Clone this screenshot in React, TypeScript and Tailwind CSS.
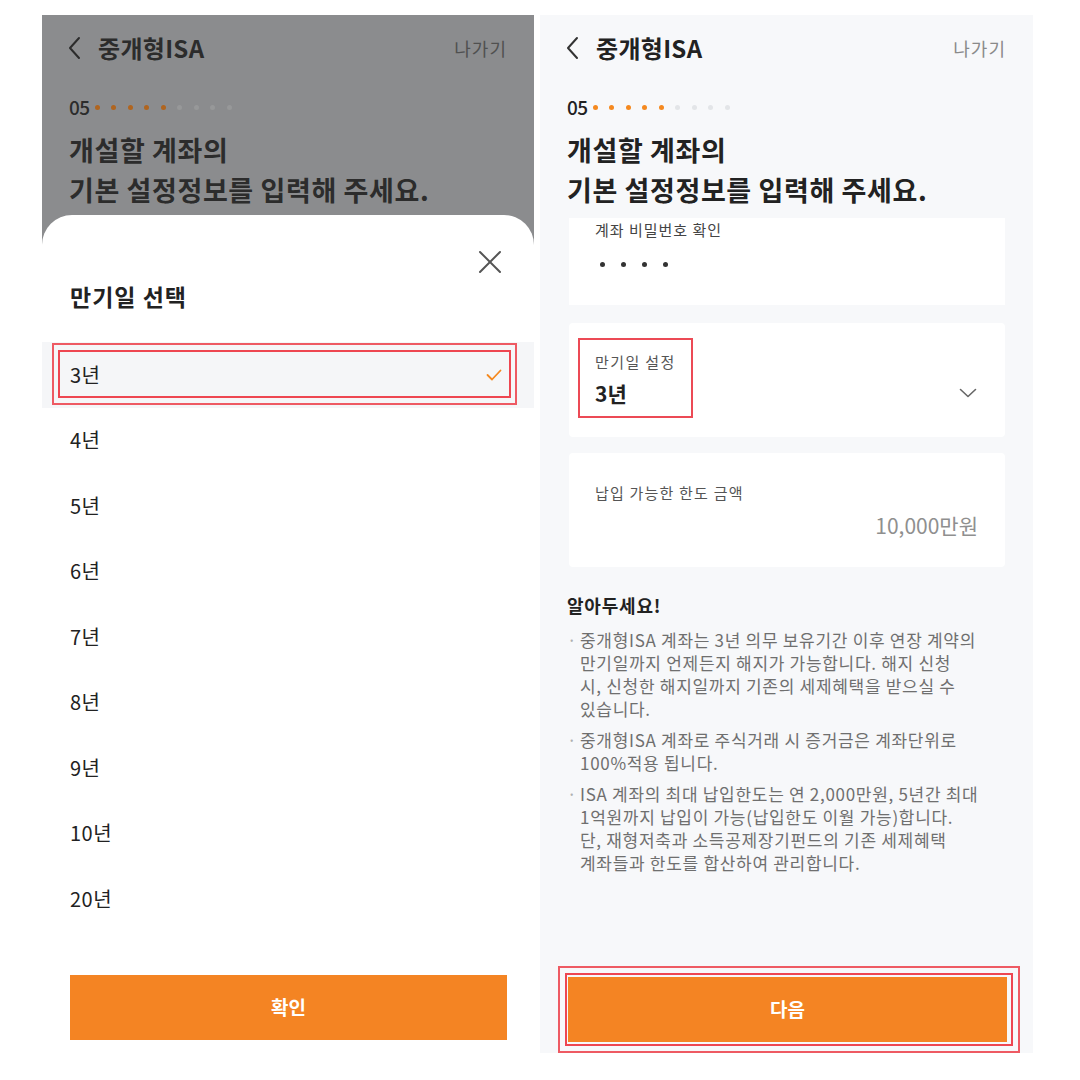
import React from 'react';

const font = "font-['Noto_Sans_CJK_KR','Noto_Sans',sans-serif]";

const ChevronLeft = ({ color }: { color: string }) => (
    <svg width="14" height="24" viewBox="0 0 14 24" fill="none">
        <path d="M11 2 L2 12 L11 22" stroke={color} strokeWidth="2" strokeLinecap="round" strokeLinejoin="round" />
    </svg>
);

const Header = ({ dim }: { dim: boolean }) => {
    const text = dim ? 'text-[#2c2c2c]' : 'text-[#222]';
    const on = dim ? 'bg-[#b0651f]' : 'bg-[#f5891f]';
    const off = dim ? 'bg-[#979899]' : 'bg-[#e3e5e8]';
    return (
        <div className="pt-[19px] pl-[26px] pr-[27px]">
            <div className="flex h-[28px] items-center justify-between">
                <div className="flex items-center gap-[16px]">
                    <ChevronLeft color={dim ? '#2c2c2c' : '#333'} />
                    <span className={`text-[24px] font-bold tracking-[0.3px] ${text}`}>중개형ISA</span>
                </div>
                <span className={`text-[18px] tracking-[1px] ${dim ? 'text-[#505050]' : 'text-[#8a8a8a]'}`}>나가기</span>
            </div>
            <div className="mt-[34px] ml-[1px] flex h-[22px] items-center">
                <span className={`text-[19px] font-medium tracking-[-0.5px] ${text}`}>05</span>
                <div className="ml-[5px] flex items-center gap-[11.5px]">
                    {[0, 1, 2, 3, 4].map(i => (
                        <span key={i} className={`h-[5px] w-[5px] rounded-full ${on}`} />
                    ))}
                    {[0, 1, 2, 3].map(i => (
                        <span key={i} className={`h-[5px] w-[5px] rounded-full ${off}`} />
                    ))}
                </div>
            </div>
            <h1 className={`mt-[12px] ml-[1px] text-[27px] font-bold leading-[40px] tracking-[0.6px] ${text}`}>
                개설할 계좌의
                <br />
                기본 설정정보를 입력해 주세요.
            </h1>
        </div>
    );
};

const years = ['3년', '4년', '5년', '6년', '7년', '8년', '9년', '10년', '20년'];

const LeftPanel = () => (
    <div className="flex h-[1038px] w-[492px] flex-col bg-[#8b8c8e]">
        <div className="h-[200px]">
            <Header dim />
        </div>
        <div className="flex flex-1 flex-col rounded-t-[30px] bg-white pt-[35px]">
            <div className="flex justify-end pr-[32px]">
                <svg width="24" height="24" viewBox="0 0 24 24" fill="none">
                    <path d="M2 2 L22 22 M22 2 L2 22" stroke="#555" strokeWidth="2" strokeLinecap="round" />
                </svg>
            </div>
            <h2 className="mt-[7px] pl-[28px] text-[23px] font-bold leading-[30px] tracking-[1px] text-[#222]">만기일 선택</h2>
            <ul className="mt-[31px]">
                {years.map((y, i) => (
                    <li
                        key={y}
                        className={`relative flex h-[65.5px] items-center justify-between px-[28px] text-[20px] tracking-[0.5px] text-[#222] ${i === 0 ? 'bg-[#f5f6f8]' : ''}`}
                    >
                        <span>{y}</span>
                        {i === 0 && (
                            <>
                                <svg width="16" height="12" viewBox="0 0 16 12" fill="none" className="mr-[4px]">
                                    <path d="M1.5 6 L6 10.5 L14.5 1.5" stroke="#f5891f" strokeWidth="1.8" strokeLinecap="round" strokeLinejoin="round" />
                                </svg>
                                <div className="absolute top-[1px] bottom-[3px] left-[10px] right-[17px] border-2 border-[#ee5a63]" />
                                <div className="absolute top-[8px] bottom-[10px] left-[16px] right-[23px] border-2 border-[#ee4651]" />
                            </>
                        )}
                    </li>
                ))}
            </ul>
            <button className="mt-auto mb-[13px] ml-[28px] h-[65px] w-[437px] bg-[#f48423] text-[19px] font-bold text-white">
                확인
            </button>
        </div>
    </div>
);

const notes = [
    ['중개형ISA 계좌는 3년 의무 보유기간 이후 연장 계약의', '만기일까지 언제든지 해지가 가능합니다. 해지 신청', '시, 신청한 해지일까지 기존의 세제혜택을 받으실 수', '있습니다.'],
    ['중개형ISA 계좌로 주식거래 시 증거금은 계좌단위로', '100%적용 됩니다.'],
    ['ISA 계좌의 최대 납입한도는 연 2,000만원, 5년간 최대', '1억원까지 납입이 가능(납입한도 이월 가능)합니다.', '단, 재형저축과 소득공제장기펀드의 기존 세제혜택', '계좌들과 한도를 합산하여 관리합니다.'],
];

const RightPanel = () => (
    <div className="flex h-[1038px] w-[493px] flex-col bg-[#f7f8fa]">
        <Header dim={false} />
        <div className="mt-[8px] px-[28px] pl-[29px]">
            <div className="h-[87px] bg-white pt-[3px] pl-[26px]">
                <p className="text-[15px] leading-[18px] tracking-[1px] text-[#444]">계좌 비밀번호 확인</p>
                <div className="mt-[23px] ml-[5px] flex gap-[16px]">
                    {[0, 1, 2, 3].map(i => (
                        <span key={i} className="h-[5px] w-[5px] rounded-full bg-[#333]" />
                    ))}
                </div>
            </div>
            <div className="relative mt-[18px] h-[114px] rounded-[4px] bg-white pt-[29px] pl-[26px] pr-[28px]">
                <p className="text-[15px] leading-[20px] tracking-[1.4px] text-[#555]">만기일 설정</p>
                <div className="mt-[7px] flex items-center justify-between">
                    <span className="text-[21px] font-bold leading-[28px] text-[#222]">3년</span>
                    <svg width="18" height="10" viewBox="0 0 18 10" fill="none">
                        <path d="M1.5 1.5 L9 8.5 L16.5 1.5" stroke="#666" strokeWidth="1.6" strokeLinecap="round" strokeLinejoin="round" />
                    </svg>
                </div>
                <div className="absolute top-[15px] left-[9px] h-[80px] w-[115px] border-2 border-[#ec4a55]" />
            </div>
            <div className="mt-[16px] h-[114px] rounded-[4px] bg-white pt-[30px] pl-[26px] pr-[27px]">
                <p className="text-[15px] leading-[20px] tracking-[1.2px] text-[#555]">납입 가능한 한도 금액</p>
                <p className="mt-[8px] text-right text-[21px] leading-[28px] text-[#8f8f8f]">10,000만원</p>
            </div>
            <h3 className="mt-[26px] -ml-[2px] text-[18px] font-bold leading-[24px] tracking-[0.8px] text-[#222]">알아두세요!</h3>
            <div className="mt-[11px] -ml-[2px]">
                {notes.map((lines, i) => (
                    <div key={i} className={`flex text-[17px] leading-[23px] text-[#6f6f6f] ${i > 0 ? 'mt-[8px]' : ''}`}>
                        <span className="w-[13px] shrink-0 text-[#b0b0b0]">·</span>
                        <div>
                            {lines.map(l => (
                                <div key={l} className="whitespace-nowrap tracking-[0.7px]">{l}</div>
                            ))}
                        </div>
                    </div>
                ))}
            </div>
        </div>
        <div className="relative mt-auto mb-[11px] ml-[28px] w-[439px]">
            <div className="absolute -top-[11px] -bottom-[11px] -left-[10px] -right-[13px] border-2 border-[#ee5a63]" />
            <div className="absolute -top-[4px] -bottom-[4px] -left-[3px] -right-[6px] border-2 border-[#ee4651]" />
            <button className="h-[65px] w-full bg-[#f48423] text-[19px] font-bold text-white">다음</button>
        </div>
    </div>
);

const App = () => {
    return (
        <div className={`flex h-[1080px] w-[1080px] gap-[6px] bg-white pt-[15px] pl-[42px] ${font}`}>
            <LeftPanel />
            <RightPanel />
        </div>
    );
};

export default App;
